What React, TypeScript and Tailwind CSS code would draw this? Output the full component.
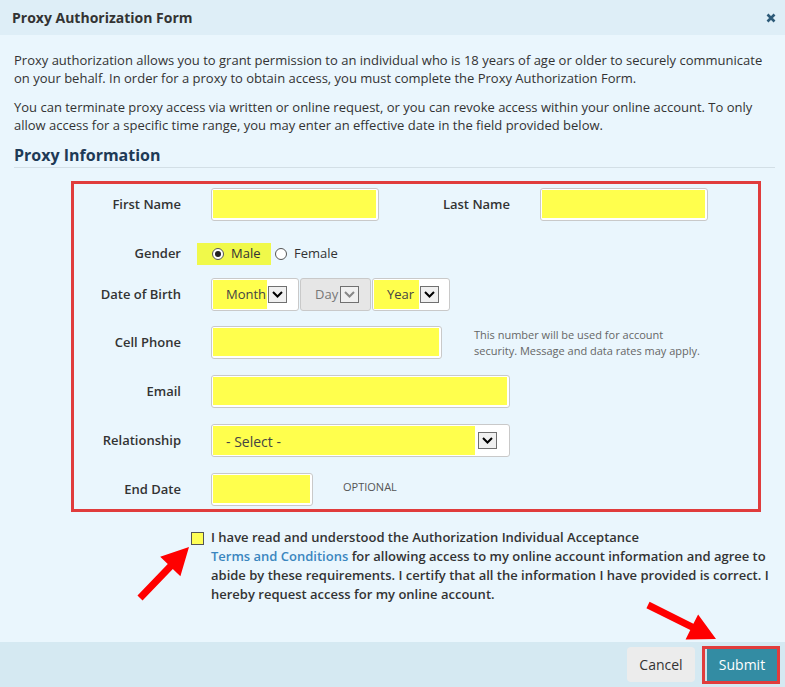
import React from 'react'

const arrow = (x1: number, y1: number, x2: number, y2: number) => {
  const dx = x2 - x1
  const dy = y2 - y1
  const len = Math.hypot(dx, dy)
  const ux = dx / len
  const uy = dy / len
  const nx = -uy
  const ny = ux
  const head = 27
  const hw = 14
  const sw = 3.5
  const bx = x2 - ux * head
  const by = y2 - uy * head
  const pts = [
    [x1 + nx * sw, y1 + ny * sw],
    [bx + nx * sw, by + ny * sw],
    [bx + nx * hw, by + ny * hw],
    [x2, y2],
    [bx - nx * hw, by - ny * hw],
    [bx - nx * sw, by - ny * sw],
    [x1 - nx * sw, y1 - ny * sw],
  ]
  return pts.map((p) => p.join(',')).join(' ')
}

const Chevron = ({ disabled }: { disabled?: boolean }) => (
  <span className="flex h-[17px] w-[19px] items-center justify-center border border-[#707070] bg-[#f0f0f0]">
    <svg width="11" height="7" viewBox="0 0 11 7">
      <path d="M1 1 L5.5 5.5 L10 1" fill="none" stroke={disabled ? '#888' : '#000'} strokeWidth="2" />
    </svg>
  </span>
)

const Field = ({ w }: { w: string }) => (
  <div className={`${w} h-[33px] rounded-[3px] border border-[#c9c9c9] bg-white pb-[2px] pl-[1px] pr-[2px] pt-[1px]`}>
    <div className="h-full w-full bg-[#ffff4d]" />
  </div>
)

const Label = ({ children, w = 'w-[107px]' }: { children: React.ReactNode; w?: string }) => (
  <div className={`${w} shrink-0 text-right text-[13px] font-semibold text-[#333]`}>{children}</div>
)

const Radio = ({ checked }: { checked?: boolean }) => (
  <span className="flex h-[12px] w-[12px] items-center justify-center rounded-full border border-[#555] bg-white">
    {checked && <span className="h-[6px] w-[6px] rounded-full bg-[#222]" />}
  </span>
)

export default function App() {
  return (
    <div className="relative flex h-[687px] w-[785px] flex-col overflow-hidden bg-[#eaf6fd] font-['Open_Sans',sans-serif] text-[#333]">
      <div className="flex h-[35px] shrink-0 items-center justify-between bg-[#deeef7] pl-[12px] pr-[9px]">
        <span className="text-[14px] font-bold text-[#333]">Proxy Authorization Form</span>
        <svg width="10" height="10" viewBox="0 0 10 10">
          <path d="M1.5 1.5 L8.5 8.5 M8.5 1.5 L1.5 8.5" stroke="#2d5a78" strokeWidth="2.6" />
        </svg>
      </div>

      <div className="min-h-0 flex-1 overflow-hidden pl-[14px] pr-[10px] pt-[16px]">
        <p className="text-[13px] leading-[18px]">
          Proxy authorization allows you to grant permission to an individual who is 18 years of age or older to securely communicate on your behalf. In order for a proxy to obtain access, you must complete the Proxy Authorization Form.
        </p>
        <p className="mt-[11px] text-[13px] leading-[18px]">
          You can terminate proxy access via written or online request, or you can revoke access within your online account. To only allow access for a specific time range, you may enter an effective date in the field provided below.
        </p>
        <h2 className="mt-[10px] border-b border-[#d3dfe6] pb-[1px] text-[16px] font-bold leading-[22px] text-[#1e3a56]">
          Proxy Information
        </h2>

        <div className="ml-[57px] mt-[13px] w-[690px] border-[3px] border-[#e03c3c] pb-[3px] pt-[4px]">
          <div className="flex h-[33px] items-center">
            <Label>First Name</Label>
            <div className="ml-[30px]"><Field w="w-[168px]" /></div>
            <Label w="w-[131px]">Last Name</Label>
            <div className="ml-[30px]"><Field w="w-[168px]" /></div>
          </div>

          <div className="mt-[16px] flex h-[33px] items-center">
            <Label>Gender</Label>
            <div className="ml-[16px] flex h-[22px] w-[74px] items-center bg-[#f0f94a] pl-[15px]">
              <Radio checked />
              <span className="ml-[7px] text-[13px]">Male</span>
            </div>
            <span className="ml-[4px]"><Radio /></span>
            <span className="ml-[7px] text-[13px]">Female</span>
          </div>

          <div className="mt-[8px] flex h-[33px] items-center">
            <Label>Date of Birth</Label>
            <div className="ml-[30px] flex gap-[1px]">
              <div className="flex h-[33px] w-[88px] items-center rounded-[3px] border border-[#c9c9c9] bg-white pl-[1px]">
                <span className="flex h-[29px] w-[54px] items-center bg-[#ffff4d] pl-[13px] pt-[1px] text-[13px] text-[#444]">Month</span>
                <span className="ml-[1px]"><Chevron /></span>
              </div>
              <div className="flex h-[33px] w-[71px] items-center rounded-[3px] border border-[#c9c9c9] bg-[#e6e6e6] pl-[14px]">
                <span className="w-[25px] pt-[1px] text-[13px] text-[#777]">Day</span>
                <Chevron disabled />
              </div>
              <div className="flex h-[33px] w-[78px] items-center rounded-[3px] border border-[#c9c9c9] bg-white pl-[1px]">
                <span className="flex h-[29px] w-[45px] items-center bg-[#ffff4d] pl-[13px] pt-[1px] text-[13px] text-[#444]">Year</span>
                <span className="ml-[1px]"><Chevron /></span>
              </div>
            </div>
          </div>

          <div className="mt-[15px] flex h-[33px] items-center">
            <Label>Cell Phone</Label>
            <div className="ml-[30px]"><Field w="w-[231px]" /></div>
            <div className="ml-[32px] text-[11px] leading-[16px] text-[#666]">
              This number will be used for account
              <br />
              security. Message and data rates may apply.
            </div>
          </div>

          <div className="mt-[16px] flex h-[33px] items-center">
            <Label>Email</Label>
            <div className="ml-[30px]"><Field w="w-[299px]" /></div>
          </div>

          <div className="mt-[16px] flex h-[33px] items-center">
            <Label>Relationship</Label>
            <div className="ml-[30px] flex h-[33px] w-[299px] items-center rounded-[3px] border border-[#c9c9c9] bg-white pl-[1px]">
              <span className="flex h-[29px] w-[262px] items-center bg-[#ffff4d] pl-[13px] pt-[1px] text-[14px] text-[#444]">- Select -</span>
              <span className="ml-[3px]"><Chevron /></span>
            </div>
          </div>

          <div className="mt-[16px] flex h-[33px] items-center">
            <Label>End Date</Label>
            <div className="ml-[30px]"><Field w="w-[102px]" /></div>
            <span className="mb-[5px] ml-[30px] text-[11px] text-[#555]">OPTIONAL</span>
          </div>
        </div>

        <div className="mt-[16px] flex items-start">
          <span className="ml-[177px] mt-[4px] h-[13px] w-[13px] shrink-0 border border-[#555] bg-[#ffff55]" />
          <p className="ml-[7px] whitespace-nowrap text-[13px] font-semibold leading-[19px] text-[#333]">
            I have read and understood the Authorization Individual Acceptance
            <br />
            <span className="text-[#3a86bf]">Terms and Conditions</span> for allowing access to my online account information and agree to
            <br />
            abide by these requirements. I certify that all the information I have provided is correct. I
            <br />
            hereby request access for my online account.
          </p>
        </div>
      </div>

      <div className="flex h-[45px] shrink-0 items-center justify-end bg-[#d5e9f2] pr-[5px]">
        <button className="mr-[7px] h-[35px] w-[68px] rounded-[4px] bg-[#ececec] text-[14px] text-[#333]">Cancel</button>
        <div className="h-[38px] w-[78px] border-[3px] border-[#e03c3c]">
          <button className="h-full w-full border-l-2 border-[#cfe3ea] bg-[#338ca3] text-[14px] text-white">Submit</button>
        </div>
      </div>

      <svg className="pointer-events-none absolute left-0 top-0" width="785" height="687">
        <polygon points={arrow(140, 598, 189, 547)} fill="#ff0000" />
        <polygon points={arrow(648, 605, 716, 639)} fill="#ff0000" />
      </svg>
    </div>
  )
}
